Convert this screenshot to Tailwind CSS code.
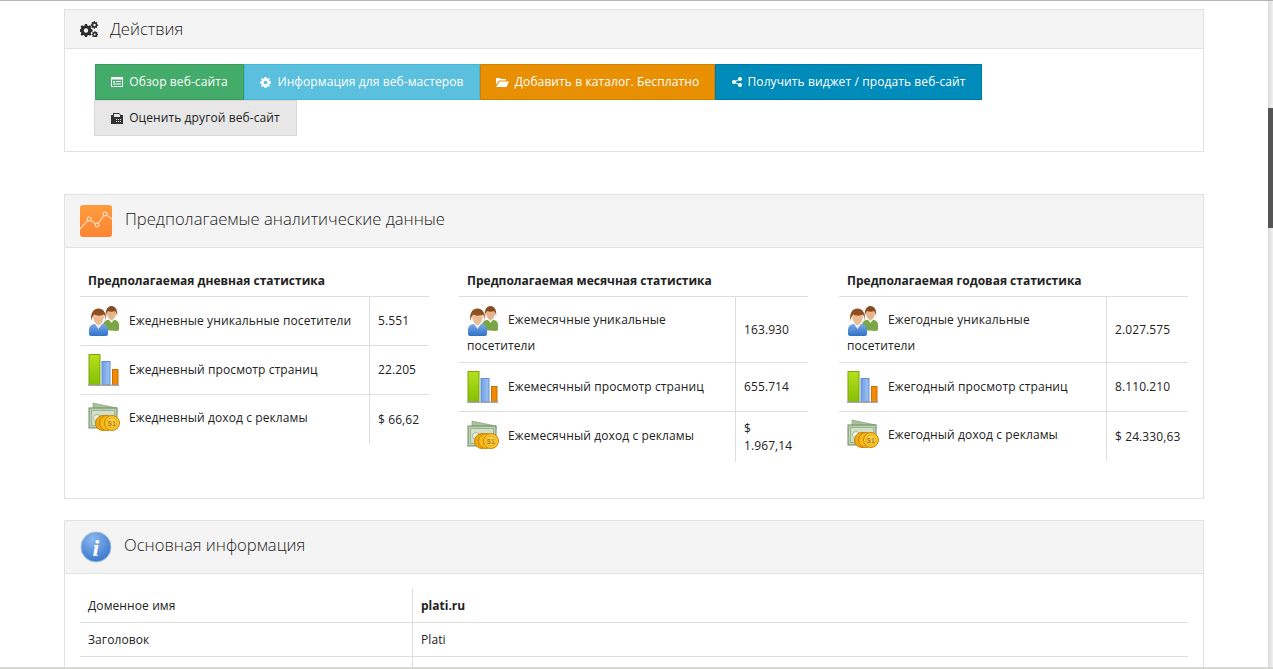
<!DOCTYPE html>
<html lang="ru">
<head>
  <meta charset="UTF-8" />
  <title>plati.ru</title>
  <script src="https://cdn.jsdelivr.net/npm/@tailwindcss/browser@4"></script>
</head>
<body class="h-[669px] overflow-hidden bg-white font-['Open_Sans',sans-serif] text-[12px] tracking-[0.1px] text-[#222] relative">
  <div class="h-px bg-[#b5b5b5]"></div>

  <!-- Scrollbar -->
  <div class="absolute right-0 top-px bottom-0 w-[5px] bg-linear-to-r from-[#dcdcdc] to-[#f0f0f0]">
    <div class="mt-[107px] h-[120px] bg-[#555]"></div>
  </div>

  <!-- Shared raster-like icons -->
  <svg class="absolute w-0 h-0" aria-hidden="true">
    <defs>
      <linearGradient id="gb" x1="0" x2="0" y1="0" y2="1"><stop offset="0" stop-color="#7ca9ea"/><stop offset="1" stop-color="#2f72c4"/></linearGradient>
      <linearGradient id="gl" x1="0" x2="0" y1="0" y2="1"><stop offset="0" stop-color="#b5e01c"/><stop offset="1" stop-color="#86c005"/></linearGradient>
      <linearGradient id="gk" x1="0" x2="1" y1="0" y2="0"><stop offset="0" stop-color="#6f9fe4"/><stop offset="1" stop-color="#a0c4f2"/></linearGradient>
      <symbol id="ic-users" viewBox="0 0 32 32">
        <path d="M15 25v-5c0-3 3-5 5-5h6c3 0 5 2 5 5v4c0 1-1 2-2 2z" fill="#7aa648"/>
        <path d="M21 15l2.500 3 2.500-3z" fill="#eef3dd"/>
        <path d="M19 8c0-3 2-5 4.500-5S28 5 28 8c0 3-2 7-4.500 7S19 11 19 8z" fill="#e6b48c"/>
        <path d="M18 12c-1-6 1-11 5.500-11S30 6 29 12c0-3-1-5-2-6-2 1-5 1-7 0-1 1-2 3-2 6z" fill="#8a4a20"/>
        <path d="M1 29v-4c0-4 3-6 6-6h7c3 0 6 2 6 6v4c0 1-1 2-2 2H3c-1 0-2-1-2-2z" fill="url(#gb)"/>
        <path d="M7 19l3.500 5 3.500-5z" fill="#e9f1fb"/>
        <path d="M5 11c0-3 2.500-5 5.500-5s5.500 2 5.500 5-2.500 9-5.500 9S5 14 5 11z" fill="#ecbd94"/>
        <path d="M3.500 16C2 9 5 3.500 10.500 3.500S19 9 17.500 16c0-3-.5-5-1.500-6.500-3 1.500-7 1.500-10 0C5 11 3.500 13 3.500 16z" fill="#8f4e22"/>
      </symbol>
      <symbol id="ic-bars" viewBox="0 0 32 32">
        <rect x="1" y="0.500" width="11" height="30" fill="url(#gl)" stroke="#7da312"/>
        <rect x="14" y="7.500" width="8" height="23" fill="url(#gk)" stroke="#5f8fd0"/>
        <rect x="24.500" y="15.500" width="5.500" height="15" fill="#f08a05" stroke="#c56f05"/>
        <rect x="0" y="30.500" width="31" height="1.500" fill="#a9a9a9"/>
      </symbol>
      <symbol id="ic-money" viewBox="0 0 32 32">
        <path d="M5 1l24 5v4L5 6z" fill="#a9c29c" stroke="#7e9a73" stroke-width=".6"/>
        <rect x="1" y="6" width="28" height="20" fill="#bcd1b0" stroke="#6d8c63"/>
        <rect x="3.500" y="8.500" width="23" height="15" fill="#d2e0c9" stroke="#8aa67f" stroke-width=".7"/>
        <circle cx="9" cy="16" r="3.500" fill="#eef3ea" stroke="#8aa67f" stroke-width=".7"/>
        <circle cx="15" cy="21" r="7.500" fill="#f0a90f" stroke="#c98206"/>
        <circle cx="19" cy="21" r="7.500" fill="#f6b916" stroke="#c98206"/>
        <circle cx="24" cy="21" r="7.500" fill="#ffc92e" stroke="#c98206"/>
        <circle cx="24" cy="21" r="5" fill="#fcd34d" stroke="#d8960f" stroke-width=".7"/>
        <text x="24" y="24" text-anchor="middle" font-family="Liberation Sans, sans-serif" font-size="7" font-weight="700" fill="#b87a08">$1</text>
      </symbol>
    </defs>
  </svg>

  <main class="w-[1140px] ml-[64px] pt-2">
    <!-- Actions -->
    <section class="border border-[#e1e1e1] h-[143px]">
      <div class="h-[39px] bg-[#f4f4f4] border-b border-[#e1e1e1] flex items-center pl-[15px]">
        <svg class="w-[18px] h-[16px] text-[#2b2b2b]" viewBox="0 0 18 16" fill="currentColor">
          <path d="M5 3h2l.4 1.400 1.200.5L10 4.200l1.400 1.400-.7 1.300.5 1.200 1.400.4v2l-1.400.4-.5 1.200.7 1.300L10 14.800l-1.400-.7-1.200.5L7 16H5l-.4-1.400-1.200-.5-1.400.7L.6 13.400l.7-1.300-.5-1.200L-.6 10.500v-2l1.400-.4.5-1.200-.7-1.300L2 4.200l1.400.7 1.200-.5zM6 7.300a2.200 2.200 0 100 4.400 2.200 2.200 0 000-4.400z"/>
          <path d="M14 0l1 .1.200.9.700.4.800-.4.700.8-.5.700.2.800.9.300v1.100l-.9.200-.3.800.5.700-.8.700-.7-.5-.7.300-.2.900h-1.100l-.2-.9-.7-.3-.8.500-.7-.8.500-.7-.3-.8-.9-.2V3.500l.9-.3.300-.8-.5-.7.700-.8.800.4.700-.4zM14.500 2.800a1.200 1.200 0 100 2.400 1.200 1.200 0 000-2.400zM14.500 10l.9.100.2.800.6.300.7-.4.600.7-.4.600.2.700.8.200v1l-.8.200-.2.700.4.600-.6.700-.7-.4-.6.300-.2.800h-.9l-.2-.8-.7-.3-.7.400-.6-.7.400-.6-.2-.7-.8-.2v-1l.8-.2.200-.7-.4-.6.600-.7.700.4.700-.3zM14.700 12.400a1 1 0 100 2 1 1 0 000-2z"/>
        </svg>
        <h2 class="ml-3 text-[16.600px] tracking-normal font-light text-[#222]">Действия</h2>
      </div>
      <div class="pl-[30px] pt-[15px] w-[960px]">
        <div class="flex h-9 text-white">
          <a class="w-[149px] bg-[#43ac6a] border border-[#3c9a5f] flex items-center justify-center gap-[6px]">
            <svg class="w-[12px] h-[10px]" viewBox="0 0 12 10" fill="currentColor"><path fill-rule="evenodd" d="M0 0h12v10H0zM1 2.500v6.500h10V2.500zM2 4h2v1.500H2zM5 4h5v1H5zM2 6.500h8v1H2z"/></svg>
            Обзор веб-сайта
          </a>
          <a class="w-[236px] bg-[#5bc0de] border border-[#46b8da] flex items-center justify-center gap-[6px]">
            <svg class="w-[11px] h-[11px]" viewBox="0 0 12 12" fill="currentColor"><path fill-rule="evenodd" d="M5 0h2l.3 1.500 1.200.5L9.800 1.200l1 1-.8 1.300.5 1.200L12 5v2l-1.500.3-.5 1.200.8 1.300-1 1L8.500 10l-1.200.5L7 12H5l-.3-1.500L3.500 10l-1.300.8-1-1 .8-1.300-.5-1.200L0 7V5l1.500-.3.500-1.200-.8-1.300 1-1L3.500 2l1.200-.5zM6 4a2 2 0 100 4 2 2 0 000-4z"/></svg>
            Информация для веб-мастеров
          </a>
          <a class="w-[235px] bg-[#e99002] border border-[#d08002] flex items-center justify-center gap-[6px]">
            <svg class="w-[13px] h-[10px]" viewBox="0 0 13 10" fill="currentColor"><path d="M0 1h4l1 1h5v1.500H3L0 7.500zM3.500 4.500H13L10.500 10H0z"/></svg>
            Добавить в каталог. Бесплатно
          </a>
          <a class="w-[267px] bg-[#008cba] border border-[#007aa3] flex items-center justify-center gap-[6px]">
            <svg class="w-[10px] h-[10px]" viewBox="0 0 10 10" fill="currentColor"><circle cx="2" cy="5" r="2"/><circle cx="8" cy="2" r="2"/><circle cx="8" cy="8" r="2"/><path d="M2 4.400L8 1.400v1.200L2 5.600zM2 4.400l6 3v1.200l-6-3z"/></svg>
            Получить виджет / продать веб-сайт
          </a>
        </div>
        <a class="-ml-px w-[203px] h-9 bg-[#e7e7e7] border border-[#d8d8d8] text-[#222] flex items-center justify-center gap-[6px]">
          <svg class="w-[12px] h-[12px] text-[#333]" viewBox="0 0 12 12" fill="currentColor"><path fill-rule="evenodd" d="M0 3h2V1h6l2 2h2v9H0zM3 2v3h6V3L8 2zM5 7v1h1V7zM7 7v1h1V7zM9 7v1h1V7zM5 9v1h1V9zM7 9v1h1V9zM9 9v1h1V9z"/></svg>
          Оценить другой веб-сайт
        </a>
      </div>
    </section>

    <!-- Estimated analytics -->
    <section class="mt-[42px] border border-[#e1e1e1] h-[305px]">
      <div class="h-[53px] bg-[#f4f4f4] border-b border-[#e1e1e1] flex items-center pl-[15px]">
        <svg class="w-8 h-8" viewBox="0 0 32 32">
          <defs><linearGradient id="go" x1="0" x2="0" y1="0" y2="1"><stop offset="0" stop-color="#ff9c3e"/><stop offset="1" stop-color="#fd8431"/></linearGradient></defs>
          <rect width="32" height="32" rx="3" fill="url(#go)"/>
          <path d="M0 24L9 14l8 6 8-11 7 5" fill="none" stroke="#ffd9b5" stroke-width="1.200"/>
          <circle cx="9" cy="14" r="2" fill="#ff9238" stroke="#fff0e2"/><circle cx="17" cy="20" r="2" fill="#ff9238" stroke="#fff0e2"/><circle cx="25" cy="9" r="2" fill="#ff9238" stroke="#fff0e2"/>
        </svg>
        <h2 class="ml-[13px] mb-[3px] text-[16.600px] tracking-normal font-light text-[#222]">Предполагаемые аналитические данные</h2>
      </div>
      <div class="flex pl-[15px] pt-[21px]">

        <div class="w-[349px]">
          <h3 class="pl-2 pt-[3px] h-[27px] font-bold tracking-normal text-[#222]">Предполагаемая дневная статистика</h3>
          <div class="grid grid-cols-[290px_59px] border-t border-[#ddd]">
            <div class="h-[49px] pl-2 pr-2 border-r border-b border-[#ddd] flex items-center"><svg class="w-[32px] h-[32px] shrink-0 mr-[9px]" viewBox="0 0 32 32"><use href="#ic-users"/></svg>Ежедневные уникальные посетители</div>
            <div class="h-[49px] pl-2 border-b border-[#ddd] flex items-center">5.551</div>
            <div class="h-[49px] pl-2 pr-2 border-r border-b border-[#ddd] flex items-center"><svg class="w-[32px] h-[32px] shrink-0 mr-[9px]" viewBox="0 0 32 32"><use href="#ic-bars"/></svg>Ежедневный просмотр страниц</div>
            <div class="h-[49px] pl-2 border-b border-[#ddd] flex items-center">22.205</div>
            <div class="h-[49px] pl-2 pr-2 pb-[3px] border-r border-[#ddd] flex items-center"><svg class="w-[32px] h-[32px] shrink-0 mr-[9px]" viewBox="0 0 32 32"><use href="#ic-money"/></svg>Ежедневный доход с рекламы</div>
            <div class="h-[49px] pl-2 flex items-center">$ 66,62</div>
          </div>
        </div>

        <div class="w-[349px] ml-[30px]">
          <h3 class="pl-2 pt-[3px] h-[27px] font-bold tracking-normal text-[#222]">Предполагаемая месячная статистика</h3>
          <div class="grid grid-cols-[277px_72px] border-t border-[#ddd]">
            <div class="h-[66px] pl-2 pr-5 border-r border-b border-[#ddd] leading-[26px] pt-[10px]"><svg class="inline-block align-middle w-[32px] h-[32px] -my-1 mr-[9px]" viewBox="0 0 32 32"><use href="#ic-users"/></svg>Ежемесячные уникальные посетители</div>
            <div class="h-[66px] pl-2 border-b border-[#ddd] flex items-center">163.930</div>
            <div class="h-[49px] pl-2 pr-2 border-r border-b border-[#ddd] flex items-center"><svg class="w-[32px] h-[32px] shrink-0 mr-[9px]" viewBox="0 0 32 32"><use href="#ic-bars"/></svg>Ежемесячный просмотр страниц</div>
            <div class="h-[49px] pl-2 border-b border-[#ddd] flex items-center">655.714</div>
            <div class="h-[50px] pl-2 pr-2 pb-[3px] border-r border-[#ddd] flex items-center"><svg class="w-[32px] h-[32px] shrink-0 mr-[9px]" viewBox="0 0 32 32"><use href="#ic-money"/></svg>Ежемесячный доход с рекламы</div>
            <div class="h-[50px] pl-2 leading-[17px] flex items-center">$<br />1.967,14</div>
          </div>
        </div>

        <div class="w-[349px] ml-[31px]">
          <h3 class="pl-2 pt-[3px] h-[27px] font-bold tracking-normal text-[#222]">Предполагаемая годовая статистика</h3>
          <div class="grid grid-cols-[268px_81px] border-t border-[#ddd]">
            <div class="h-[66px] pl-2 pr-5 border-r border-b border-[#ddd] leading-[26px] pt-[10px]"><svg class="inline-block align-middle w-[32px] h-[32px] -my-1 mr-[9px]" viewBox="0 0 32 32"><use href="#ic-users"/></svg>Ежегодные уникальные посетители</div>
            <div class="h-[66px] pl-2 border-b border-[#ddd] flex items-center">2.027.575</div>
            <div class="h-[49px] pl-2 pr-2 border-r border-b border-[#ddd] flex items-center"><svg class="w-[32px] h-[32px] shrink-0 mr-[9px]" viewBox="0 0 32 32"><use href="#ic-bars"/></svg>Ежегодный просмотр страниц</div>
            <div class="h-[49px] pl-2 border-b border-[#ddd] flex items-center">8.110.210</div>
            <div class="h-[49px] pl-2 pr-2 pb-[3px] border-r border-[#ddd] flex items-center"><svg class="w-[32px] h-[32px] shrink-0 mr-[9px]" viewBox="0 0 32 32"><use href="#ic-money"/></svg>Ежегодный доход с рекламы</div>
            <div class="h-[49px] pl-2 flex items-center">$ 24.330,63</div>
          </div>
        </div>
      </div>
    </section>

    <!-- Basic info -->
    <section class="mt-[21px] border border-b-0 border-[#e1e1e1] h-[148px] overflow-hidden">
      <div class="h-[53px] bg-[#f4f4f4] border-b border-[#e1e1e1] flex items-center pl-[15px]">
        <svg class="w-8 h-8" viewBox="0 0 32 32">
          <defs><radialGradient id="gi" cx="40%" cy="25%" r="85%"><stop offset="0" stop-color="#8db8ee"/><stop offset="1" stop-color="#2f6fc9"/></radialGradient></defs>
          <circle cx="16" cy="16" r="15" fill="url(#gi)" stroke="#9fc0e8"/>
          <text x="16" y="25" text-anchor="middle" font-family="Liberation Serif, serif" font-size="24" font-weight="700" font-style="italic" fill="#fff">i</text>
        </svg>
        <h2 class="ml-3 mb-[3px] text-[16.600px] tracking-normal font-light text-[#222]">Основная информация</h2>
      </div>
      <div class="pl-[15px] pr-[15px] pt-[15px]">
        <div class="grid grid-cols-[333px_1fr]">
          <div class="h-[34px] pl-2 border-r border-b border-[#ddd] flex items-center">Доменное имя</div>
          <div class="h-[34px] pl-2 border-b border-[#ddd] flex items-center font-bold tracking-normal">plati.ru</div>
          <div class="h-[34px] pl-2 border-r border-b border-[#ddd] flex items-center">Заголовок</div>
          <div class="h-[34px] pl-2 border-b border-[#ddd] flex items-center">Plati</div>
          <div class="h-[10px] border-r border-[#ddd]"></div>
          <div class="h-[10px]"></div>
        </div>
      </div>
    </section>
  </main>

  <!-- bottom edge of the window -->
  <div class="absolute left-0 right-0 bottom-0 h-[2px] bg-[#d9d9d0]"></div>
</body>
</html>
